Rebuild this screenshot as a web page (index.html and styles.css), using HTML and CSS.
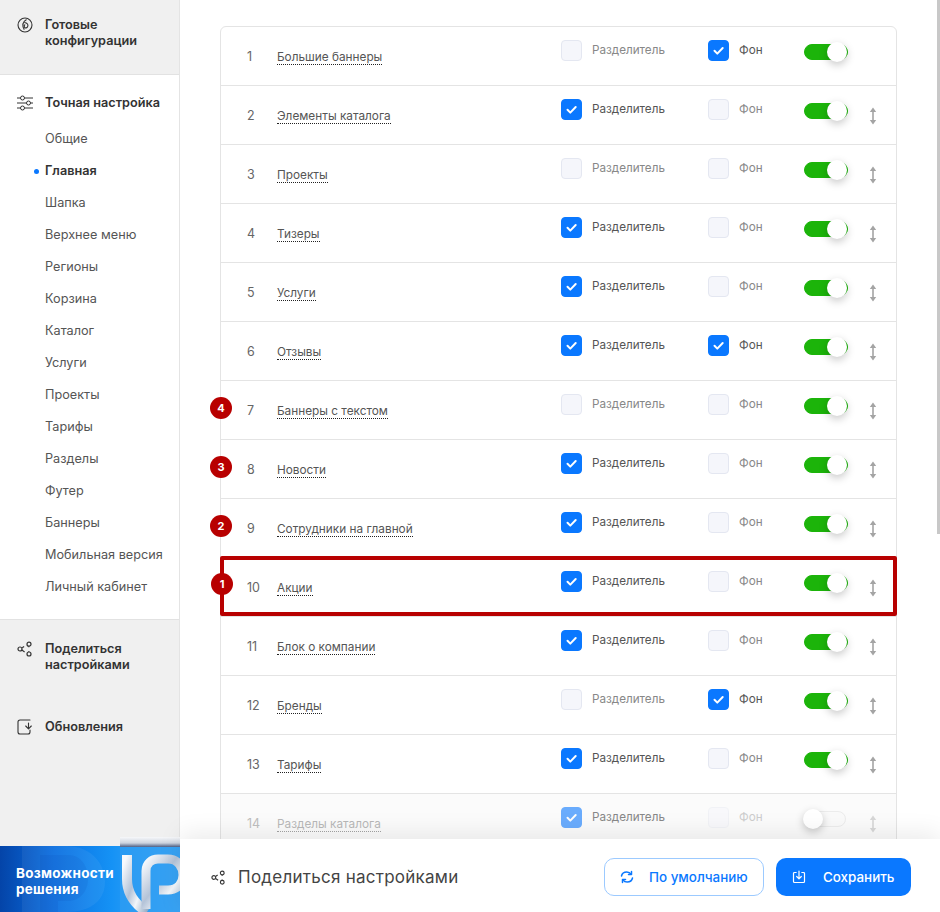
FILE: index.html
```html
<!DOCTYPE html>
<html lang="ru">
<head>
<meta charset="utf-8">
<title>Настройки</title>
<link rel="stylesheet" href="styles.css">
</head>
<body>
<svg class="defs" width="0" height="0" aria-hidden="true">
  <symbol id="tick" viewBox="0 0 21 21"><path d="M6.5 10.8l2.800 2.800 5.400-5.600" fill="none" stroke="#fff" stroke-width="2" stroke-linecap="round" stroke-linejoin="round"/></symbol>
  <symbol id="drag" viewBox="0 0 8 18"><path d="M4 0.500L7.200 5H.8zM4 17.500L7.200 13H.8z" fill="#a4a4a4"/><path d="M4 4v10" stroke="#a4a4a4" stroke-width="1.600"/></symbol>
  <symbol id="share" viewBox="0 0 16 16"><g fill="none" stroke="#333" stroke-width="1.200"><circle cx="3" cy="8" r="2"/><circle cx="12" cy="3.200" r="2"/><circle cx="12" cy="13" r="2"/><path d="M5.200 6.700l1.900-1.300M4.900 9.100l2.700 1.900M11.800 5.300v.9M11.800 10.200v.8"/></g></symbol>
</svg>
<div class="page">
  <aside class="sidebar">
    <div class="side-block side-top">
      <svg class="side-icon" viewBox="0 0 16 16"><g fill="none" stroke="#333" stroke-width="1.100"><circle cx="8" cy="8" r="7"/><path d="M9.500 2.500C5.500 5 5.200 9 7.300 12.600"/><path d="M7.300 5.500c3.200.2 4.200 2.400 3.300 4.200-.7 1.400-2.200 1.600-3 .6-.7-.9-.4-2.200.5-3"/></g></svg>
      <span class="side-title">Готовые<br>конфигурации</span>
    </div>
    <nav class="side-nav">
      <div class="side-head">
        <svg class="side-icon" viewBox="0 0 16 16"><g fill="none" stroke="#333" stroke-width="1"><path d="M0 3h3.500M7.500 3H16M0 8h9.500M13.500 8H16M0 13h3.500M7.500 13H16"/><circle cx="5.500" cy="3" r="2"/><circle cx="11.500" cy="8" r="2"/><circle cx="5.500" cy="13" r="2"/></g></svg>
        <span class="side-title">Точная настройка</span>
      </div>
      <a class="side-link">Общие</a>
      <a class="side-link active">Главная</a>
      <a class="side-link">Шапка</a>
      <a class="side-link">Верхнее меню</a>
      <a class="side-link">Регионы</a>
      <a class="side-link">Корзина</a>
      <a class="side-link">Каталог</a>
      <a class="side-link">Услуги</a>
      <a class="side-link">Проекты</a>
      <a class="side-link">Тарифы</a>
      <a class="side-link">Разделы</a>
      <a class="side-link">Футер</a>
      <a class="side-link">Баннеры</a>
      <a class="side-link">Мобильная версия</a>
      <a class="side-link">Личный кабинет</a>
    </nav>
    <div class="side-block side-bottom">
      <div class="side-item">
        <svg class="side-icon"><use href="#share"/></svg>
        <span class="side-title">Поделиться<br>настройками</span>
      </div>
      <div class="side-item">
        <svg class="side-icon" viewBox="0 0 16 16"><g fill="none" stroke="#333" stroke-width="1.100" stroke-linecap="round" stroke-linejoin="round"><path d="M13 1H3a2 2 0 0 0-2 2v10a2 2 0 0 0 2 2h8a2 2 0 0 0 2-2v-2"/><path d="M11.500 4v5.500M8.700 7l2.800 2.800L14.300 7"/></g></svg>
        <span class="side-title">Обновления</span>
      </div>
    </div>
    <div class="promo">
      <svg class="promo-art" viewBox="0 0 180 75" width="180" height="75">
        <defs>
          <linearGradient id="metal" x1="0" y1="0" x2="1" y2="1">
            <stop offset="0" stop-color="#f8fafd"/><stop offset=".4" stop-color="#b4c3d8"/><stop offset=".65" stop-color="#f2f6fa"/><stop offset="1" stop-color="#97abc4"/>
          </linearGradient>
          <linearGradient id="bar" x1="0" y1="0" x2="0" y2="1">
            <stop offset="0" stop-color="#f7f8fa"/><stop offset=".6" stop-color="#cdd4df"/><stop offset="1" stop-color="#4f5f84"/>
          </linearGradient>
        </defs>
        <path d="M22 9h45c26 0 38 20 38 36 0 18-14 30-38 30H22z" fill="#fff" opacity=".06"/>
        <path d="M40 18h28c14 0 20 12 20 24s-8 22-20 22H58v11H40z" fill="#0a3fa8" opacity=".1"/>
        <rect x="120" y="9" width="60" height="66" fill="#2f9df2" opacity=".7"/>
        <rect x="120" y="0" width="60" height="10" fill="url(#bar)"/>
        <path d="M127 18v24c0 16 9 26 20 33" fill="none" stroke="url(#metal)" stroke-width="10"/>
        <path d="M146 72V34c0-8 6-12 12-12h10c10 0 15 8 15 16s-5 15-15 15h-9" fill="none" stroke="url(#metal)" stroke-width="9"/>
      </svg>
      <span class="promo-text">Возможности<br>решения</span>
    </div>
  </aside>

  <main class="main">
    <div class="card">
      <div class="row">
        <span class="num">1</span><span class="name-cell"><span class="name">Большие баннеры</span></span>
        <label class="check"><span class="box"></span><span class="check-label">Разделитель</span></label>
        <label class="check"><span class="box on"><svg><use href="#tick"/></svg></span><span class="check-label on">Фон</span></label>
        <span class="toggle on"></span>
      </div>
      <div class="row">
        <span class="num">2</span><span class="name-cell"><span class="name">Элементы каталога</span></span>
        <label class="check"><span class="box on"><svg><use href="#tick"/></svg></span><span class="check-label on">Разделитель</span></label>
        <label class="check"><span class="box"></span><span class="check-label">Фон</span></label>
        <span class="toggle on"></span><svg class="drag"><use href="#drag"/></svg>
      </div>
      <div class="row">
        <span class="num">3</span><span class="name-cell"><span class="name">Проекты</span></span>
        <label class="check"><span class="box"></span><span class="check-label">Разделитель</span></label>
        <label class="check"><span class="box"></span><span class="check-label">Фон</span></label>
        <span class="toggle on"></span><svg class="drag"><use href="#drag"/></svg>
      </div>
      <div class="row">
        <span class="num">4</span><span class="name-cell"><span class="name">Тизеры</span></span>
        <label class="check"><span class="box on"><svg><use href="#tick"/></svg></span><span class="check-label on">Разделитель</span></label>
        <label class="check"><span class="box"></span><span class="check-label">Фон</span></label>
        <span class="toggle on"></span><svg class="drag"><use href="#drag"/></svg>
      </div>
      <div class="row">
        <span class="num">5</span><span class="name-cell"><span class="name">Услуги</span></span>
        <label class="check"><span class="box on"><svg><use href="#tick"/></svg></span><span class="check-label on">Разделитель</span></label>
        <label class="check"><span class="box"></span><span class="check-label">Фон</span></label>
        <span class="toggle on"></span><svg class="drag"><use href="#drag"/></svg>
      </div>
      <div class="row">
        <span class="num">6</span><span class="name-cell"><span class="name">Отзывы</span></span>
        <label class="check"><span class="box on"><svg><use href="#tick"/></svg></span><span class="check-label on">Разделитель</span></label>
        <label class="check"><span class="box on"><svg><use href="#tick"/></svg></span><span class="check-label on">Фон</span></label>
        <span class="toggle on"></span><svg class="drag"><use href="#drag"/></svg>
      </div>
      <div class="row">
        <span class="badge">4</span>
        <span class="num">7</span><span class="name-cell"><span class="name">Баннеры с текстом</span></span>
        <label class="check"><span class="box"></span><span class="check-label">Разделитель</span></label>
        <label class="check"><span class="box"></span><span class="check-label">Фон</span></label>
        <span class="toggle on"></span><svg class="drag"><use href="#drag"/></svg>
      </div>
      <div class="row">
        <span class="badge">3</span>
        <span class="num">8</span><span class="name-cell"><span class="name">Новости</span></span>
        <label class="check"><span class="box on"><svg><use href="#tick"/></svg></span><span class="check-label on">Разделитель</span></label>
        <label class="check"><span class="box"></span><span class="check-label">Фон</span></label>
        <span class="toggle on"></span><svg class="drag"><use href="#drag"/></svg>
      </div>
      <div class="row">
        <span class="badge">2</span>
        <span class="num">9</span><span class="name-cell"><span class="name">Сотрудники на главной</span></span>
        <label class="check"><span class="box on"><svg><use href="#tick"/></svg></span><span class="check-label on">Разделитель</span></label>
        <label class="check"><span class="box"></span><span class="check-label">Фон</span></label>
        <span class="toggle on"></span><svg class="drag"><use href="#drag"/></svg>
      </div>
      <div class="row row-marked">
        <span class="mark"></span>
        <span class="badge badge-first">1</span>
        <span class="num">10</span><span class="name-cell"><span class="name">Акции</span></span>
        <label class="check"><span class="box on"><svg><use href="#tick"/></svg></span><span class="check-label on">Разделитель</span></label>
        <label class="check"><span class="box"></span><span class="check-label">Фон</span></label>
        <span class="toggle on"></span><svg class="drag"><use href="#drag"/></svg>
      </div>
      <div class="row">
        <span class="num">11</span><span class="name-cell"><span class="name">Блок о компании</span></span>
        <label class="check"><span class="box on"><svg><use href="#tick"/></svg></span><span class="check-label on">Разделитель</span></label>
        <label class="check"><span class="box"></span><span class="check-label">Фон</span></label>
        <span class="toggle on"></span><svg class="drag"><use href="#drag"/></svg>
      </div>
      <div class="row">
        <span class="num">12</span><span class="name-cell"><span class="name">Бренды</span></span>
        <label class="check"><span class="box"></span><span class="check-label">Разделитель</span></label>
        <label class="check"><span class="box on"><svg><use href="#tick"/></svg></span><span class="check-label on">Фон</span></label>
        <span class="toggle on"></span><svg class="drag"><use href="#drag"/></svg>
      </div>
      <div class="row">
        <span class="num">13</span><span class="name-cell"><span class="name">Тарифы</span></span>
        <label class="check"><span class="box on"><svg><use href="#tick"/></svg></span><span class="check-label on">Разделитель</span></label>
        <label class="check"><span class="box"></span><span class="check-label">Фон</span></label>
        <span class="toggle on"></span><svg class="drag"><use href="#drag"/></svg>
      </div>
      <div class="row row-off">
        <span class="num faded">14</span><span class="name-cell faded"><span class="name">Разделы каталога</span></span>
        <label class="check"><span class="box on faded"><svg><use href="#tick"/></svg></span><span class="check-label">Разделитель</span></label>
        <label class="check faded"><span class="box"></span><span class="check-label">Фон</span></label>
        <span class="toggle"></span><svg class="drag faded"><use href="#drag"/></svg>
      </div>
    </div>
  </main>

  <footer class="bar">
    <div class="bar-share">
      <svg class="bar-icon"><use href="#share"/></svg>
      <span>Поделиться настройками</span>
    </div>
    <div class="bar-actions">
      <button class="btn btn-outline">
        <svg class="btn-icon" viewBox="0 0 14 14"><g fill="none" stroke="#0a78ff" stroke-width="1.500" stroke-linecap="round" stroke-linejoin="round"><path d="M1.500 6C2 3.500 4.200 2 6.800 2c1.800 0 3.300.8 4.200 2.200"/><path d="M11.500 1.500v3h-3"/><path d="M12.500 8c-.5 2.500-2.700 4-5.300 4-1.800 0-3.300-.8-4.200-2.200"/><path d="M2.500 12.500v-3h3"/></g></svg>
        <span>По умолчанию</span>
      </button>
      <button class="btn btn-solid">
        <svg class="btn-icon" viewBox="0 0 14 14"><g fill="none" stroke="#fff" stroke-width="1.200" stroke-linecap="round" stroke-linejoin="round"><path d="M4.200 2.500H2.500a1 1 0 0 0-1 1v8a1 1 0 0 0 1 1h9a1 1 0 0 0 1-1v-8a1 1 0 0 0-1-1H9.800"/><path d="M7 1v7.500M4.700 6.500L7 8.800l2.300-2.300"/></g></svg>
        <span>Сохранить</span>
      </button>
    </div>
  </footer>
  <div class="scroll-thumb"></div>
</div>
</body>
</html>
```
FILE: styles.css
```css
* { box-sizing: border-box; }
html, body { margin: 0; padding: 0; height: 912px; overflow: hidden; background: #fff; }
body { font-family: Inter, "Noto Sans", "Liberation Sans", sans-serif; font-size: 12.700px; line-height: 16px; color: #333; }
.defs { position: absolute; }
.page { position: relative; display: flex; width: 940px; height: 912px; overflow: hidden; }

/* sidebar */
.sidebar { display: flex; flex-direction: column; flex: 0 0 180px; width: 180px; height: 912px; border-right: 1px solid #e4e4e4; }
.side-block { background: #f0f0f0; }
.side-top { display: flex; gap: 12px; height: 75px; padding: 17px 0 0 17px; border-bottom: 1px solid #e2e2e2; }
.side-icon { flex: none; width: 16px; height: 16px; }
.side-title { font-weight: 600; color: #333; }
.side-nav { display: flex; flex-direction: column; height: 544px; padding-top: 20px; }
.side-head { display: flex; gap: 12px; padding-left: 17px; margin-bottom: 8px; height: 20px; }
.side-link { position: relative; display: block; height: 32px; padding: 8px 0 0 45px; color: #555; }
.side-link.active { font-weight: 600; color: #333; }
.side-link.active::before { content: ""; position: absolute; left: 34px; top: 14px; width: 5px; height: 5px; border-radius: 50%; background: #0a78ff; }
.side-bottom { flex: 1; padding: 21px 0 0 17px; border-top: 1px solid #e2e2e2; }
.side-item { display: flex; gap: 12px; }
.side-item + .side-item { margin-top: 46px; }
.promo { position: relative; flex: none; height: 66px; margin-right: -1px; padding: 19px 0 0 16px; background: linear-gradient(90deg, #0444a8 0, #0a6ee0 30%, #1592f5 62%, #4fb0f5 100%); }
.promo-art { position: absolute; left: 0; bottom: 0; }
.promo-text { position: relative; display: block; font-size: 13.500px; font-weight: 700; color: #fff; letter-spacing: .02em; }

/* table */
.main { flex: 1; padding: 26px 43px 0 40px; min-width: 0; }
.card { border: 1px solid #e4e4e4; border-radius: 6px 6px 0 0; }
.row { position: relative; display: grid; grid-template-columns: 30px 284px 147px 96px 44px 1fr; align-items: start; height: 59px; padding: 13px 0 0 26px; border-bottom: 1px solid #e4e4e4; }
.num { padding-top: 9px; color: #666; font-size: 12.500px; }
.name-cell { padding-top: 9px; }
.name { display: inline-block; color: #555; font-size: 11.800px; border-bottom: 1px dotted #222; height: 16px; }
.check { display: flex; align-items: flex-start; gap: 10px; }
.box { flex: none; width: 21px; height: 21px; border: 1px solid #e4e7f1; border-radius: 4px; background: #f5f6fb; }
.box.on { border-color: #0a78ff; background: #0a78ff; }
.box svg { display: block; width: 21px; height: 21px; margin: -1px; }
.check-label { padding-top: 2px; font-size: 11.700px; color: #888; }
.check-label.on { color: #555; }
.toggle { position: relative; display: block; width: 44px; height: 16px; margin-top: 4px; border: 1px solid #ececec; border-radius: 8px; background: #fafafa; }
.toggle::after { content: ""; position: absolute; left: -2px; top: -3px; width: 20px; height: 20px; border-radius: 50%; background: #fff; box-shadow: 0 3px 9px rgba(0, 0, 0, .22); }
.toggle.on { border-color: #1cb40a; background: #1cb40a; }
.toggle.on::after { left: 22px; }
.drag { width: 8px; height: 18px; margin: 8px 0 0 21px; }
.row-off { background: #fbfbfb; }
.faded { opacity: .4; }
.box.on.faded { opacity: .6; }
.row-off .toggle { width: 42px; }

/* annotations */
.badge { position: absolute; left: -11px; top: 16px; display: flex; align-items: center; justify-content: center; width: 22px; height: 22px; border-radius: 50%; background: #b80000; color: #fff; font-size: 11px; font-weight: 700; z-index: 2; }
.badge-first { left: -10px; top: 15px; }
.mark { position: absolute; left: -1px; right: -1px; top: -2px; bottom: 0; border: 4px solid #b80000; border-radius: 2px; z-index: 1; pointer-events: none; }

/* bottom bar */
.bar { position: absolute; left: 180px; right: 0; bottom: 0; display: flex; align-items: center; justify-content: space-between; height: 73px; padding: 3px 29px 0 31px; background: #fff; box-shadow: 0 -6px 24px rgba(0, 0, 0, .08); z-index: 3; }
.bar-share { display: flex; align-items: center; gap: 12px; font-size: 17px; color: #444; letter-spacing: .015em; }
.bar-icon { width: 15px; height: 15px; }
.bar-actions { display: flex; gap: 12px; }
.btn { display: flex; align-items: center; height: 38px; border-radius: 10px; font: 500 13.400px/16px Inter, "Noto Sans", sans-serif; }
.btn-icon { flex: none; width: 14px; height: 14px; }
.btn-outline { width: 160px; gap: 15px; padding: 0 0 0 15px; border: 1px solid #9ccaff; background: #fff; color: #0a78ff; }
.btn-solid { width: 135px; gap: 17px; padding: 0 0 0 16px; border: 0; background: #0a78ff; color: #fff; }
.scroll-thumb { position: absolute; right: 0; top: 0; width: 3px; height: 534px; background: #c8c8c8; z-index: 4; }
```
